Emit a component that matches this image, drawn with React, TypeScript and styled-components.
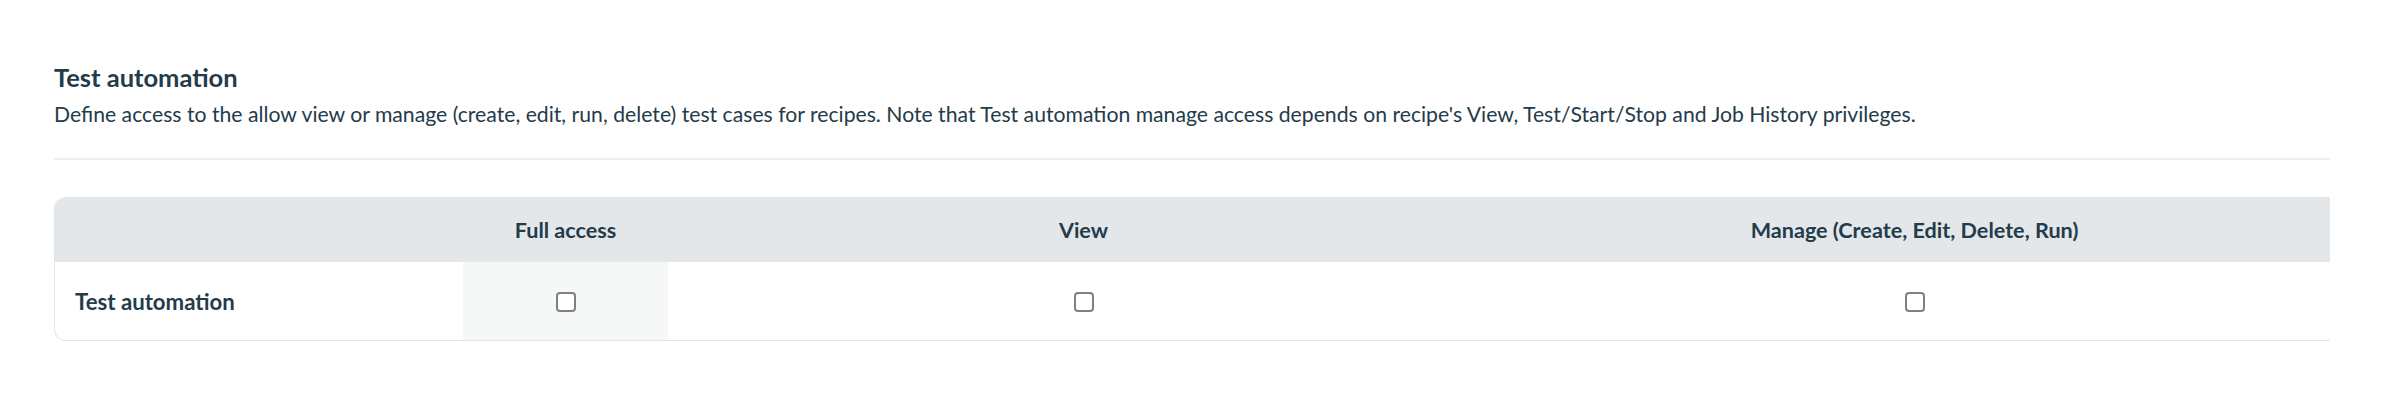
import React, { useState } from 'react';
import styled, { createGlobalStyle } from 'styled-components';

const GlobalStyle = createGlobalStyle`
  body {
    margin: 0;
    background: #ffffff;
    font-family: Lato, "Noto Sans", sans-serif;
    color: #243b4a;
  }
`;

const Page = styled.div`
  padding: 59px 58px 0 54px;
`;

const Title = styled.h3`
  margin: 0;
  font-size: 25.5px;
  line-height: 36px;
  font-weight: 700;
`;

const Description = styled.p`
  margin: 4px 0 0;
  font-size: 21.2px;
  line-height: 30px;
`;

const Divider = styled.hr`
  margin: 29px 0 0;
  border: 0;
  border-top: 2px solid #eceeef;
`;

const TableFrame = styled.div`
  margin-top: 37px;
  border: 1px solid #e1e5e8;
  border-right: 0;
  border-radius: 12px 0 0 12px;
  overflow: hidden;
`;

const Table = styled.table`
  width: 100%;
  border-collapse: collapse;
  table-layout: fixed;
`;

const HeadCell = styled.th`
  height: 64px;
  padding: 0;
  background: #e3e7ea;
  font-size: 21.6px;
  font-weight: 700;
  text-align: center;
`;

const LabelCell = styled.td`
  height: 78px;
  padding: 0 0 0 20px;
  font-size: 22.2px;
  font-weight: 700;
  text-align: left;
`;

const CheckCell = styled.td<{ $shaded?: boolean }>`
  padding: 0;
  text-align: center;
  vertical-align: middle;
  background: ${({ $shaded }) => ($shaded ? '#f6f8f8' : '#ffffff')};
`;

const Box = styled.input.attrs({ type: 'checkbox' })`
  appearance: none;
  display: inline-block;
  vertical-align: middle;
  margin: 0;
  width: 20px;
  height: 20px;
  border: 2px solid #7d8184;
  border-radius: 4px;
  background: #ffffff;
  cursor: pointer;

  &:checked {
    background: #1f6f8b;
    border-color: #1f6f8b;
  }
`;

const columns = ['Full access', 'View', 'Manage (Create, Edit, Delete, Run)'];

const App: React.FC = () => {
  const [checked, setChecked] = useState<boolean[]>([false, false, false]);

  const toggle = (i: number) =>
    setChecked(prev => prev.map((v, j) => (j === i ? !v : v)));

  return (
    <Page>
      <GlobalStyle />
      <Title>Test automation</Title>
      <Description>
        Define access to the allow view or manage (create, edit, run, delete) test cases for recipes. Note that
        Test automation manage access depends on recipe's View, Test/Start/Stop and Job History privileges.
      </Description>
      <Divider />
      <TableFrame>
        <Table>
          <colgroup>
            <col style={{ width: 408 }} />
            <col style={{ width: 205 }} />
            <col />
            <col />
          </colgroup>
          <thead>
            <tr>
              <HeadCell />
              {columns.map(c => (
                <HeadCell key={c}>{c}</HeadCell>
              ))}
            </tr>
          </thead>
          <tbody>
            <tr>
              <LabelCell>Test automation</LabelCell>
              {columns.map((c, i) => (
                <CheckCell key={c} $shaded={i === 0}>
                  <Box checked={checked[i]} onChange={() => toggle(i)} aria-label={c} />
                </CheckCell>
              ))}
            </tr>
          </tbody>
        </Table>
      </TableFrame>
    </Page>
  );
};

export default App;
